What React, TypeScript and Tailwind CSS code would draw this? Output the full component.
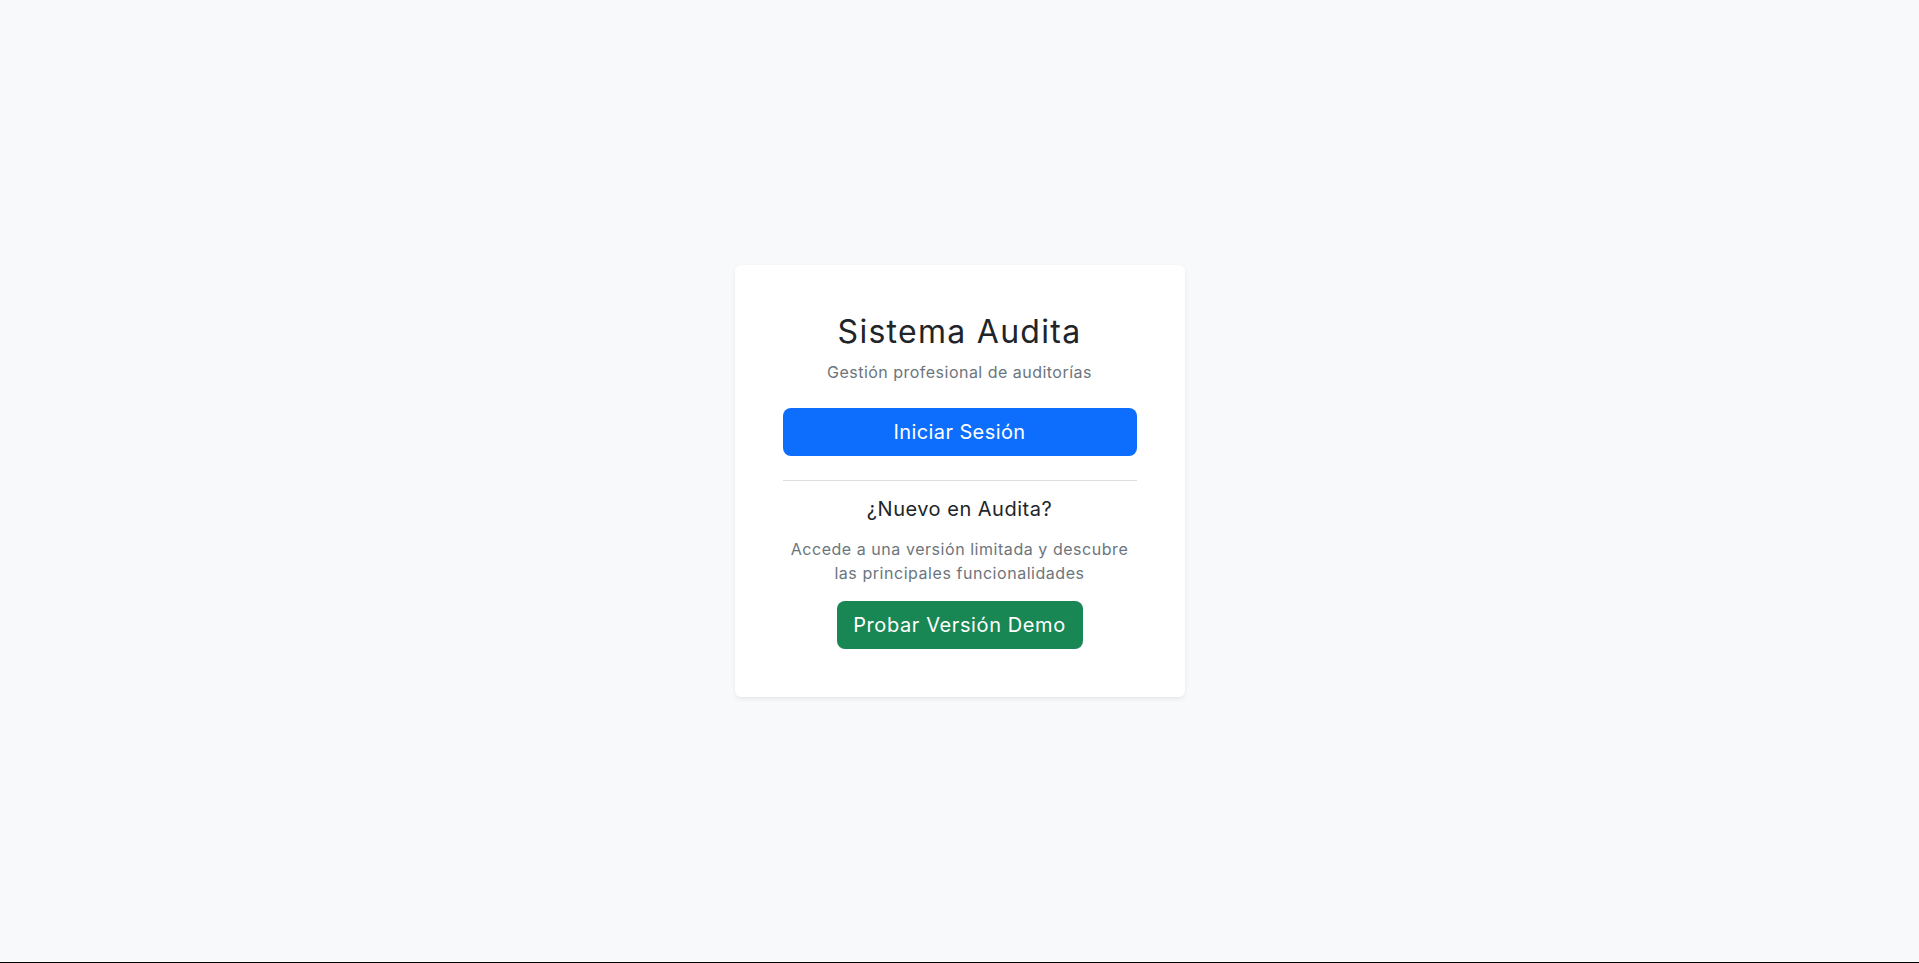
export default function App() {
  return (
    <div
      className="flex h-screen flex-col bg-[#f8f9fa]"
      style={{ fontFamily: "Inter, 'Open Sans', sans-serif" }}
    >
      <main className="flex flex-1 items-center justify-center">
        <div className="w-[450px] rounded-md bg-white p-12 text-center shadow-[0_2px_4px_rgba(0,0,0,0.075)]">
          <h2 className="mb-2 text-[32px] leading-[1.2] font-normal tracking-[0.04em] text-[#212529]">
            Sistema Audita
          </h2>
          <p className="mb-6 text-base leading-6 tracking-[0.03em] text-[#6c757d]">
            Gestión profesional de auditorías
          </p>
          <button className="h-12 w-full rounded-lg bg-[#0d6efd] text-xl tracking-[0.02em] text-white">
            Iniciar Sesión
          </button>
          <hr className="mt-6 mb-4 border-t border-[#dcdddd]" />
          <h5 className="mb-4 text-[20px] leading-6 tracking-[0.025em] text-[#212529]">
            ¿Nuevo en Audita?
          </h5>
          <p className="mb-4 text-base leading-6 tracking-[0.034em] text-[#6c757d]">
            Accede a una versión limitada y descubre
            <br />
            las principales funcionalidades
          </p>
          <button className="h-12 w-[246px] rounded-lg bg-[#198754] text-xl tracking-[0.03em] text-white">
            Probar Versión Demo
          </button>
        </div>
      </main>
      <div className="h-px bg-black" />
    </div>
  );
}
